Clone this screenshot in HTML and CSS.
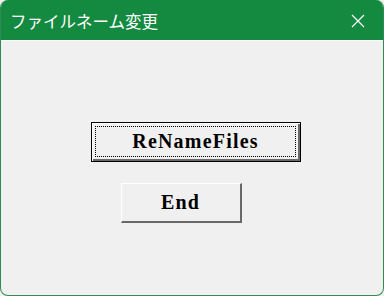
FILE: index.html
```html
<!DOCTYPE html>
<html>
<head>
<meta charset="utf-8">
<link rel="stylesheet" href="styles.css">
</head>
<body>
<div class="window">
  <div class="titlebar">
    <span class="title">ファイルネーム変更</span>
    <svg class="close" width="14" height="14" viewBox="0 0 14 14"><path d="M1 1L13 13M13 1L1 13" stroke="#fff" stroke-width="1.2" fill="none"/></svg>
  </div>
  <div class="content">
    <button class="btn btn-default"><span class="focus">ReNameFiles</span></button>
    <button class="btn btn-end">End</button>
  </div>
</div>
</body>
</html>
```

FILE: styles.css
```css
html, body {
  margin: 0;
  padding: 0;
  background: #f0f0f0;
}
.window {
  width: 384px;
  height: 296px;
  box-sizing: border-box;
  border-radius: 8px;
  overflow: hidden;
  border: 1px solid #2e8b52;
  border-top: none;
  background: #f0f0f0;
  display: flex;
  flex-direction: column;
}
.titlebar {
  height: 40px;
  margin: 0 -1px;
  background: #138a3f;
  display: flex;
  align-items: center;
  justify-content: space-between;
  padding: 0 19px 0 10px;
  border-bottom: 1px solid #ffffff;
  flex-shrink: 0;
}
.title {
  color: #fff;
  font-family: "Noto Sans CJK JP", sans-serif;
  font-size: 16.5px;
  line-height: 20px;
  padding-top: 2px;
}
.close {
  display: block;
  margin-top: 2px;
}
.content {
  display: flex;
  flex-direction: column;
  align-items: center;
  padding-top: 81px;
  gap: 21px;
}
.btn {
  font-family: "Liberation Serif", serif;
  font-weight: bold;
  font-size: 20px;
  letter-spacing: 1.2px;
  color: #000;
  background: #f0f0f0;
  height: 40px;
  box-sizing: border-box;
  padding: 0;
  margin: 0;
  display: flex;
  align-items: center;
  justify-content: center;
}
.btn-default {
  width: 210px;
  margin-left: 8px;
  border: 1px solid #000;
  box-shadow: inset 1px 1px 0 #fff, inset -2px -2px 0 #696969;
  padding: 3px 4px 4px 3px;
}
.focus {
  flex: 1;
  align-self: stretch;
  display: flex;
  align-items: center;
  justify-content: center;
  border: 1px dotted #000;
}
.btn-end {
  width: 121px;
  margin-left: -22px;
  border: none;
  border-top: 1px solid #fff;
  border-left: 1px solid #fff;
  border-right: 2px solid #696969;
  border-bottom: 2px solid #696969;
}
```
